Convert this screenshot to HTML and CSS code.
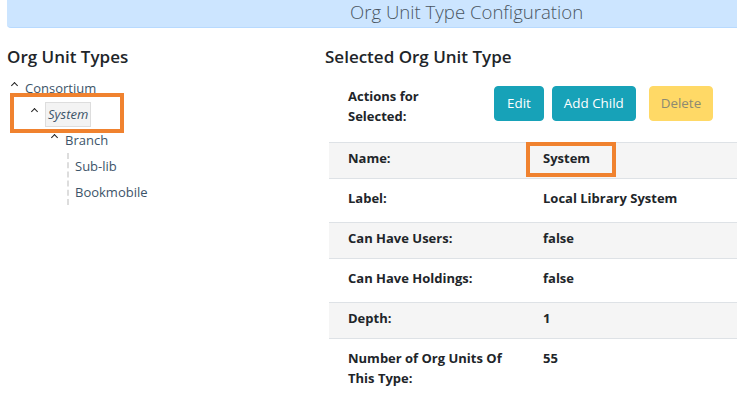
FILE: index.html
```html
<!DOCTYPE html>
<html>
<head>
    <meta charset="UTF-8">
    <title>Org Unit Type Configuration</title>
    <link rel="stylesheet" href="styles.css">
</head>
<body>
    <header class="page-title">
        <h1>Org Unit Type Configuration</h1>
    </header>
    <main class="layout">
        <section class="tree-panel">
            <h2>Org Unit Types</h2>
            <ul class="tree">
                <li>
                    <div class="node"><span class="caret"></span><span class="node-label">Consortium</span></div>
                    <ul>
                        <li class="marked">
                            <div class="node"><span class="caret"></span><span class="node-label active">System</span></div>
                            <span class="mark tree-mark"></span>
                            <ul>
                                <li>
                                    <div class="node"><span class="caret"></span><span class="node-label">Branch</span></div>
                                    <ul class="leaves">
                                        <li><div class="node"><span class="node-label">Sub-lib</span></div></li>
                                        <li><div class="node"><span class="node-label">Bookmobile</span></div></li>
                                    </ul>
                                </li>
                            </ul>
                        </li>
                    </ul>
                </li>
            </ul>
        </section>
        <section class="detail-panel">
            <h2>Selected Org Unit Type</h2>
            <div class="actions">
                <div class="actions-label">Actions for Selected:</div>
                <button class="btn btn-info btn-edit">Edit</button>
                <button class="btn btn-info btn-add">Add Child</button>
                <button class="btn btn-warning" disabled>Delete</button>
            </div>
            <div class="details">
                <div class="row striped">
                    <div class="label">Name:</div>
                    <div class="value marked">System<span class="mark value-mark"></span></div>
                </div>
                <div class="row">
                    <div class="label">Label:</div>
                    <div class="value">Local Library System</div>
                </div>
                <div class="row striped">
                    <div class="label">Can Have Users:</div>
                    <div class="value">false</div>
                </div>
                <div class="row">
                    <div class="label">Can Have Holdings:</div>
                    <div class="value">false</div>
                </div>
                <div class="row striped">
                    <div class="label">Depth:</div>
                    <div class="value">1</div>
                </div>
                <div class="row">
                    <div class="label">Number of Org Units Of This Type:</div>
                    <div class="value">55</div>
                </div>
            </div>
        </section>
    </main>
</body>
</html>
```

FILE: styles.css
```css
body {
    margin: 0;
    font-family: "Open Sans", Arial, sans-serif;
    font-size: 13px;
    color: #212529;
    background: #fff;
    overflow: hidden;
}

.page-title {
    margin-left: 7px;
    height: 27px;
    background-color: #cce5ff;
    border-bottom: 1px solid #b8daff;
    border-bottom-left-radius: 4px;
    padding-left: 343px;
}

.page-title h1 {
    margin: 0;
    font-size: 18.6px;
    font-weight: 300;
    line-height: 23px;
    color: #4a5561;
}

.layout {
    display: flex;
}

h2 {
    margin: 0;
    font-size: 17px;
    font-weight: 600;
    line-height: 24px;
    color: #212529;
}

/* tree */
.tree-panel {
    width: 318px;
    padding-left: 7px;
    padding-top: 17px;
}

.tree,
.tree ul {
    list-style: none;
    margin: 0;
    padding: 0;
}

.tree {
    margin-top: 6px;
    padding-left: 4px;
}

.tree ul {
    padding-left: 20px;
}

.tree ul.leaves {
    margin-left: 16px;
    padding-left: 6px;
    border-left: 2px dashed #ddd;
}

.node {
    display: flex;
    align-items: center;
    height: 26px;
}

.caret {
    width: 14px;
    height: 26px;
    position: relative;
}

.caret::before {
    content: "";
    position: absolute;
    left: 1px;
    top: 8px;
    width: 4px;
    height: 4px;
    border-left: 1.5px solid #222;
    border-top: 1.5px solid #222;
    transform: rotate(45deg);
}

.node-label {
    color: #3c5469;
    line-height: 20px;
}

.node-label.active {
    font-style: italic;
    background: #f3f3f3;
    border: 1px solid #ddd;
    padding: 1px 2px;
    line-height: 21px;
}

.marked {
    position: relative;
}

.mark {
    position: absolute;
    border: 4px solid #f0822f;
    pointer-events: none;
}

.tree-mark {
    left: -21px;
    top: -8px;
    width: 106px;
    height: 32px;
}

/* details */
.detail-panel {
    flex: 1;
    padding-top: 17px;
}

.actions {
    display: flex;
    align-items: flex-start;
    margin-top: 17px;
    margin-left: 4px;
    padding-left: 19px;
    height: 56px;
}

.actions-label {
    width: 116px;
    margin-right: 30px;
    font-weight: 700;
    line-height: 20px;
}

.btn {
    font-family: inherit;
    font-size: 13.4px;
    line-height: 21px;
    height: 35px;
    padding: 6px 11px;
    border: 1px solid transparent;
    border-radius: 4px;
    color: #fff;
    cursor: pointer;
}

.btn-info {
    background-color: #17a2b8;
    border-color: #17a2b8;
}

.btn-edit {
    padding: 6px 12px;
    margin-right: 8px;
}

.btn-add {
    margin-right: 13px;
}

.btn-warning {
    background-color: #ffd966;
    border-color: #ffd966;
    color: #8c8a73;
    cursor: default;
}

.details {
    margin-left: 4px;
    border-top: 1px solid #dee2e6;
}

.row {
    display: flex;
    padding: 9px 0 14px 19px;
    border-bottom: 1px solid #dee2e6;
    line-height: 20px;
    font-weight: 700;
}

.row.striped {
    background-color: #f5f5f5;
    padding-top: 5px;
    padding-bottom: 10px;
}

.label {
    width: 165px;
    padding-right: 30px;
}

.value {
    flex: 1;
}

.value-mark {
    left: -17px;
    top: -6px;
    width: 82px;
    height: 27px;
}
```
